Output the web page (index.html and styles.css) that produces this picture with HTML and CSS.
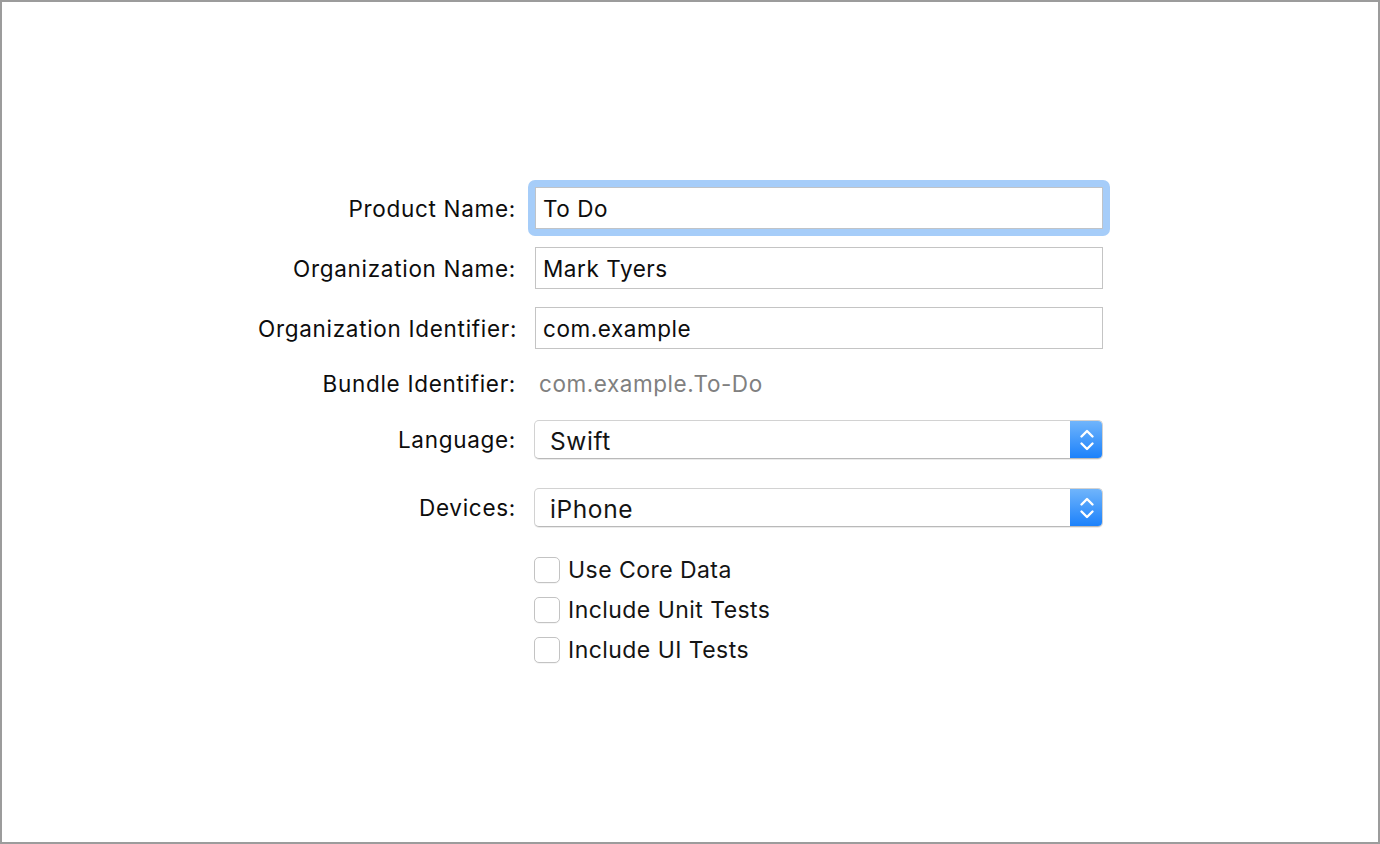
FILE: index.html
```html
<!DOCTYPE html>
<html lang="en">
<head>
<meta charset="utf-8">
<title>Project Options</title>
<link rel="stylesheet" href="styles.css">
</head>
<body>
<div class="window">
  <div class="form">
    <div class="row row-product">
      <div class="label">Product Name:</div>
      <div class="focus-ring"><div class="field">To Do</div></div>
    </div>
    <div class="row row-gap18">
      <div class="label">Organization Name:</div>
      <div class="field">Mark Tyers</div>
    </div>
    <div class="row row-gap18">
      <div class="label">Organization Identifier:</div>
      <div class="field">com.example</div>
    </div>
    <div class="row row-bundle">
      <div class="label">Bundle Identifier:</div>
      <div class="static-value">com.example.To-Do</div>
    </div>
    <div class="row row-language">
      <div class="label">Language:</div>
      <div class="popup">
        <span class="popup-text">Swift</span>
        <span class="popup-arrows">
          <svg width="16" height="24" viewBox="0 0 16 24" aria-hidden="true"><polyline points="2.5,8.5 8,3 13.5,8.5" fill="none" stroke="#fff" stroke-width="2.4" stroke-linecap="round" stroke-linejoin="round"/><polyline points="2.5,15.5 8,21 13.5,15.5" fill="none" stroke="#fff" stroke-width="2.4" stroke-linecap="round" stroke-linejoin="round"/></svg>
        </span>
      </div>
    </div>
    <div class="row row-devices">
      <div class="label">Devices:</div>
      <div class="popup">
        <span class="popup-text">iPhone</span>
        <span class="popup-arrows">
          <svg width="16" height="24" viewBox="0 0 16 24" aria-hidden="true"><polyline points="2.5,8.5 8,3 13.5,8.5" fill="none" stroke="#fff" stroke-width="2.4" stroke-linecap="round" stroke-linejoin="round"/><polyline points="2.5,15.5 8,21 13.5,15.5" fill="none" stroke="#fff" stroke-width="2.4" stroke-linecap="round" stroke-linejoin="round"/></svg>
        </span>
      </div>
    </div>
    <div class="row row-check-first">
      <div></div>
      <div class="check"><span class="box"></span><span class="check-text">Use Core Data</span></div>
    </div>
    <div class="row row-check">
      <div></div>
      <div class="check"><span class="box"></span><span class="check-text">Include Unit Tests</span></div>
    </div>
    <div class="row row-check">
      <div></div>
      <div class="check"><span class="box"></span><span class="check-text">Include UI Tests</span></div>
    </div>
  </div>
</div>
</body>
</html>
```
FILE: styles.css
```css
* {
  box-sizing: border-box;
}

html, body {
  margin: 0;
  padding: 0;
  background: #ffffff;
}

body {
  font-family: Inter, "Liberation Sans", Arial, sans-serif;
  color: #111111;
}

.window {
  width: 1380px;
  height: 844px;
  border: 2px solid #9c9c9c;
  padding: 185px 0 0 256px;
}

.form {
  display: flex;
  flex-direction: column;
}

.row {
  display: grid;
  grid-template-columns: 258px 568px;
  column-gap: 19px;
  align-items: center;
}

.row-gap18 {
  margin-top: 18px;
}

.row-bundle {
  margin-top: 18px;
  height: 32px;
}

.row-language {
  margin-top: 21px;
}

.row-devices {
  margin-top: 29px;
}

.row-check-first {
  margin-top: 30px;
}

.row-check {
  margin-top: 14px;
}

.label {
  text-align: right;
  white-space: nowrap;
  font-size: 22.5px;
  letter-spacing: 0.7px;
  line-height: 28px;
  padding-top: 1px;
  color: #0d0d0d;
}

.field {
  height: 42px;
  border: 1px solid #c4c4c4;
  background: #ffffff;
  padding-left: 7px;
  display: flex;
  align-items: center;
  font-size: 22.5px;
  letter-spacing: 0.55px;
  color: #0d0d0d;
}

.focus-ring {
  margin: -7px;
  padding: 7px;
  background: #a6cdf9;
  border-radius: 7px;
}

.focus-ring .field {
  border-color: #bfc3c8;
}

.static-value {
  padding-left: 4px;
  font-size: 22.5px;
  letter-spacing: 0.56px;
  color: #808080;
  white-space: nowrap;
}

.popup {
  margin-left: -1px;
  height: 39px;
  border: 1px solid #d2d2d2;
  border-bottom-color: #b9b9b9;
  border-radius: 5px;
  box-shadow: 0 1px 0 rgba(0, 0, 0, 0.08);
  display: flex;
  align-items: center;
  justify-content: space-between;
  overflow: hidden;
  background: #ffffff;
}

.popup-text {
  padding-left: 15px;
  padding-top: 2px;
  font-size: 24.5px;
  letter-spacing: 0.6px;
  color: #141414;
}

.popup-arrows {
  align-self: stretch;
  width: 33px;
  margin: -1px -1px -1px 0;
  background: linear-gradient(#72b6fb, #1a80fb);
  display: flex;
  align-items: center;
  justify-content: center;
}

.popup-arrows svg {
  display: block;
}

.check {
  display: flex;
  align-items: center;
  margin-left: -1px;
  gap: 8px;
  height: 26px;
}

.box {
  width: 26px;
  height: 26px;
  border: 1px solid #c3c3c3;
  border-radius: 5px;
  background: #ffffff;
  box-shadow: 0 1px 0 rgba(0, 0, 0, 0.04);
}

.check-text {
  font-size: 23px;
  letter-spacing: 0.45px;
  line-height: 26px;
  color: #141414;
  white-space: nowrap;
}
```
